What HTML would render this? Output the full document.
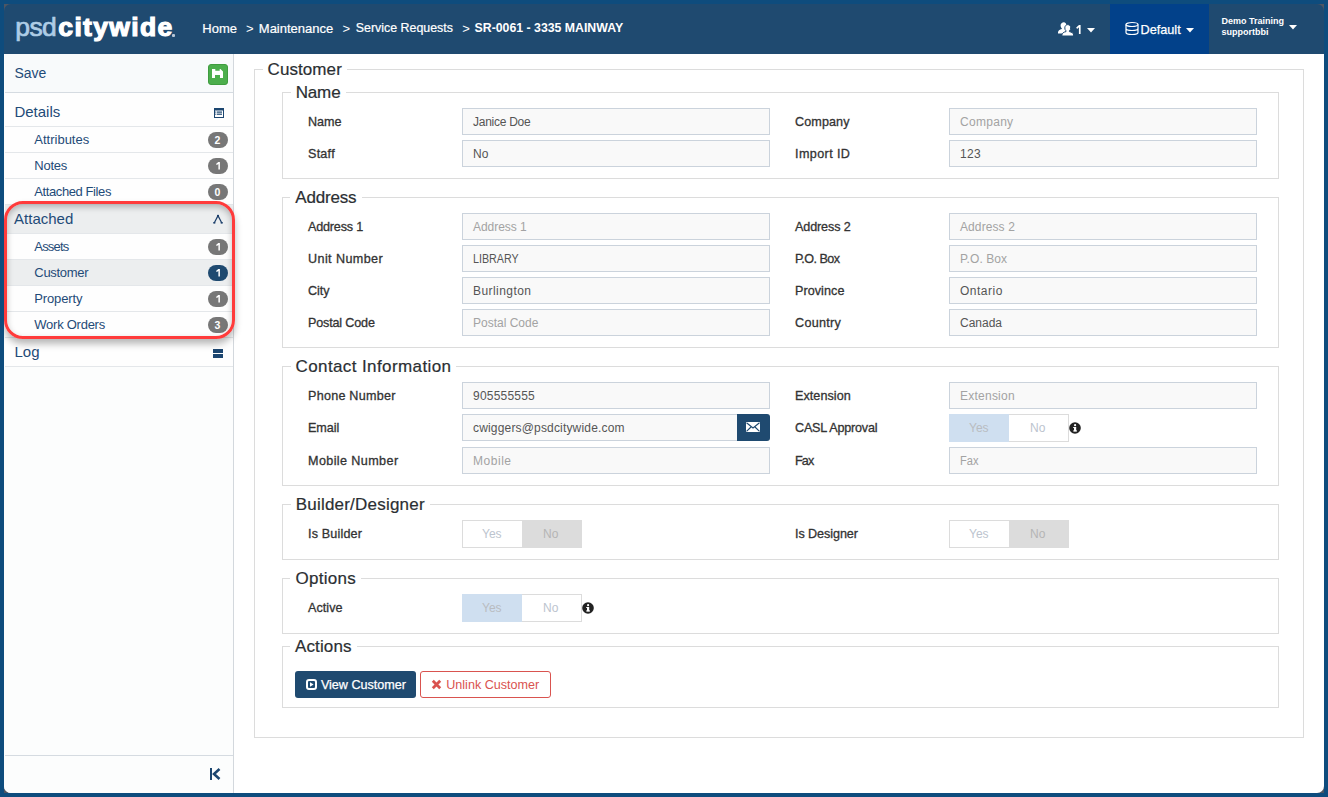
<!DOCTYPE html>
<html><head><meta charset="utf-8"><style>
html,body{margin:0;padding:0;}
body{width:1328px;height:797px;overflow:hidden;position:relative;background:#0e4c7d;font-family:"Liberation Sans",sans-serif;}
.t{position:absolute;white-space:nowrap;}
.b{position:absolute;box-sizing:border-box;}
svg{position:absolute;overflow:visible;}
</style></head><body>
<div class="b" style="left:4px;top:4px;width:8px;height:8px;background:#4e5663;"></div>
<div class="b" style="left:1316px;top:4px;width:8px;height:8px;background:#4e5663;"></div>
<div class="b" style="left:4px;top:785px;width:8px;height:8px;background:#4e5663;"></div>
<div class="b" style="left:1316px;top:785px;width:8px;height:8px;background:#4e5663;"></div>
<div id="w" style="position:absolute;left:0;top:0;width:1328px;height:797px;clip-path:inset(4px round 7px);">
<div class="b" style="left:4px;top:54px;width:1320px;height:739px;background:#fff;"></div>
<div class="b" style="left:4px;top:4px;width:1320px;height:50px;background:#1f4a70;"></div>
<div class="b" style="left:1110px;top:4px;width:99px;height:50px;background:#02418a;"></div>
<div class="t" style="left:15.3px;top:14.36px;font-size:26.5px;line-height:26.5px;color:#aecde6;font-weight:normal;letter-spacing:-0.6px;-webkit-text-stroke:0.7px #aecde6;">psd</div>
<div class="t" style="left:58.3px;top:14.26px;font-size:26.5px;line-height:26.5px;color:#ffffff;font-weight:bold;-webkit-text-stroke:1.2px #fff;letter-spacing:1.35px;">citywide</div>
<div class="b" style="left:172px;top:34px;width:3px;height:3px;background:#b7c6d6;border-radius:1px;"></div>
<div class="t" style="left:202.3px;top:21.79px;font-size:13px;line-height:13px;color:#fff;font-weight:normal;-webkit-text-stroke:0.2px #fff;">Home</div>
<div class="t" style="left:246px;top:21.79px;font-size:13px;line-height:13px;color:#fff;font-weight:normal;">&gt;</div>
<div class="t" style="left:258.8px;top:21.79px;font-size:13px;line-height:13px;color:#fff;font-weight:normal;-webkit-text-stroke:0.2px #fff;">Maintenance</div>
<div class="t" style="left:342.5px;top:21.79px;font-size:13px;line-height:13px;color:#fff;font-weight:normal;">&gt;</div>
<div class="t" style="left:355.8px;top:22.30px;font-size:12.4px;line-height:12.4px;color:#fff;font-weight:normal;-webkit-text-stroke:0.2px #fff;">Service Requests</div>
<div class="t" style="left:462.2px;top:21.79px;font-size:13px;line-height:13px;color:#fff;font-weight:normal;">&gt;</div>
<div class="t" style="left:474.6px;top:22.39px;font-size:12.3px;line-height:12.3px;color:#fff;font-weight:bold;">SR-0061 - 3335 MAINWAY</div>
<svg style="left:1076px;top:25px" width="5" height="9" viewBox="0 0 5 9"><path d="M0.2 2.5L3 0H4.6V9H2.9V2.3L1.1 3.9Z" fill="#fff"/></svg>
<svg style="left:1087px;top:28px" width="8" height="5"><path d="M0 0H8L4 4.5Z" fill="#fff"/></svg>
<div class="t" style="left:1140.5px;top:23.85px;font-size:12.7px;line-height:12.7px;color:#fff;font-weight:normal;-webkit-text-stroke:0.25px #fff;">Default</div>
<svg style="left:1186px;top:28px" width="8" height="5"><path d="M0 0H8L4 4.5Z" fill="#fff"/></svg>
<div class="t" style="left:1221.6px;top:17.28px;font-size:9px;line-height:9px;color:#fff;font-weight:bold;">Demo Training</div>
<div class="t" style="left:1221.5px;top:27.88px;font-size:9px;line-height:9px;color:#fff;font-weight:bold;">supportbbi</div>
<svg style="left:1289px;top:25px" width="8" height="5"><path d="M0 0H8L4 4.5Z" fill="#fff"/></svg>
<svg style="left:1058px;top:22px" width="16" height="14" viewBox="0 0 16 14">
<path d="M5.8 0.2C7.4 0.2 8.4 1.5 8.4 3.3C8.4 4.6 7.9 5.6 7.1 6.2V7C9.3 7.5 11 8.6 11 10.4V11.5H0V10.4C0 8.6 1.6 7.5 3.8 7V6.2C3 5.6 2.6 4.6 2.6 3.3C2.6 1.5 4.2 0.2 5.8 0.2Z" fill="#fff"/>
<path d="M9.8 2.6C11.5 2.6 12.7 4 12.7 5.9C12.7 7.2 12.2 8.2 11.4 8.8V9.6C13.7 10.1 15.6 11.2 15.6 13V14H3.9V13C3.9 11.2 5.7 10.1 8 9.6V8.8C7.2 8.2 6.8 7.2 6.8 5.9C6.8 4 8.1 2.6 9.8 2.6Z" fill="#fff" stroke="#1f4a70" stroke-width="1"/>
</svg>
<svg style="left:1124.8px;top:22px" width="15" height="13" viewBox="0 0 15 13">
<ellipse cx="7" cy="2.5" rx="6" ry="2" fill="none" stroke="#fff" stroke-width="1.2"/>
<path d="M1 2.5V10.5c0 1.1 2.7 2 6 2s6-.9 6-2V2.5M1 6.5c0 1.1 2.7 2 6 2s6-.9 6-2" fill="none" stroke="#fff" stroke-width="1.2"/>
</svg>
<div class="b" style="left:4px;top:54px;width:230px;height:739px;background:#fcfdfd;border-right:1px solid #d3d8dd;"></div>
<div class="b" style="left:5px;top:54px;width:228px;height:38px;background:#f8fafb;"></div>
<div class="b" style="left:5px;top:93px;width:228px;height:274px;background:#fefefe;"></div>
<div class="t" style="left:14.4px;top:66.05px;font-size:14px;line-height:14px;color:#1f4b78;font-weight:normal;">Save</div>
<div class="b" style="left:208px;top:64px;width:20px;height:21px;background:#4cae4c;border:1px solid #3f9c3f;border-radius:3px;"></div>
<svg style="left:212px;top:69px" width="11" height="9" viewBox="0 0 11 9"><path d="M0 0H8.5L11 2.5V9H8V6H3V9H0Z M3.3 0V1.8H7.7V0Z" fill="#fff" fill-rule="evenodd"/></svg>
<div class="b" style="left:5px;top:92px;width:228px;height:1px;background:#d5dbe1;"></div>
<div class="t" style="left:14.4px;top:104.40px;font-size:15px;line-height:15px;color:#1f4b78;font-weight:normal;">Details</div>
<svg style="left:214px;top:108px" width="10" height="10" viewBox="0 0 10 10"><rect x="0" y="0" width="10" height="10" fill="#1c4670"/><rect x="1" y="2.5" width="8" height="6.5" fill="#fff"/><rect x="3" y="3.5" width="5" height="1.2" fill="#1c4670"/><rect x="3" y="5.6" width="5" height="1.2" fill="#1c4670"/><rect x="1.3" y="3.5" width="1" height="1.2" fill="#1c4670"/><rect x="1.3" y="5.6" width="1" height="1.2" fill="#1c4670"/></svg>
<div class="b" style="left:5px;top:126px;width:228px;height:1px;background:#e4e7ea;"></div>
<div class="t" style="left:34.3px;top:132.79px;font-size:13px;line-height:13px;color:#1f4b78;font-weight:normal;"><span style="letter-spacing:-0.002px">Attribute</span>s</div>
<div class="b" style="left:208px;top:132px;width:20px;height:16px;background:#777;border-radius:8px;"></div>
<div class="t" style="left:214.6px;top:134.91px;font-size:10.5px;line-height:10.5px;color:#fff;font-weight:bold;">2</div>
<div class="b" style="left:5px;top:152px;width:228px;height:1px;background:#e4e7ea;"></div>
<div class="t" style="left:34.3px;top:158.79px;font-size:13px;line-height:13px;color:#1f4b78;font-weight:normal;"><span style="letter-spacing:-0.265px">Note</span>s</div>
<div class="b" style="left:208px;top:158px;width:20px;height:16px;background:#777;border-radius:8px;"></div>
<svg style="left:215.6px;top:162.1px" width="4" height="7.5" viewBox="0 0 4 7.5"><path d="M0 1.9L2.3 0H3.9V7.5H2.4V1.9L0.8 3.1Z" fill="#fff"/></svg>
<div class="b" style="left:5px;top:178px;width:228px;height:1px;background:#e4e7ea;"></div>
<div class="t" style="left:34.3px;top:184.79px;font-size:13px;line-height:13px;color:#1f4b78;font-weight:normal;"><span style="letter-spacing:-0.406px">Attached File</span>s</div>
<div class="b" style="left:208px;top:184px;width:20px;height:16px;background:#777;border-radius:8px;"></div>
<div class="t" style="left:214.6px;top:186.91px;font-size:10.5px;line-height:10.5px;color:#fff;font-weight:bold;">0</div>
<div class="b" style="left:5px;top:204px;width:228px;height:1px;background:#e4e7ea;"></div>
<div class="b" style="left:5px;top:205px;width:228px;height:28px;background:#eceeef;"></div>
<div class="t" style="left:14.1px;top:211.20px;font-size:15px;line-height:15px;color:#1f4b78;font-weight:normal;">Attached</div>
<svg style="left:213px;top:214px" width="10" height="10" viewBox="0 0 10 10"><path d="M1.2 9L5 1.6L8.8 9" fill="none" stroke="#1c3f6b" stroke-width="1.25"/><rect x="0.3" y="8" width="2" height="1.6" fill="#1c3f6b"/><rect x="7.7" y="8" width="2" height="1.6" fill="#1c3f6b"/><rect x="4" y="1" width="2" height="1.6" fill="#1c3f6b"/></svg>
<div class="b" style="left:5px;top:233px;width:228px;height:1px;background:#e4e7ea;"></div>
<div class="t" style="left:34.3px;top:239.79px;font-size:13px;line-height:13px;color:#1f4b78;font-weight:normal;"><span style="letter-spacing:-0.803px">Asset</span>s</div>
<div class="b" style="left:208px;top:239px;width:20px;height:16px;background:#777;border-radius:8px;"></div>
<svg style="left:215.6px;top:243.1px" width="4" height="7.5" viewBox="0 0 4 7.5"><path d="M0 1.9L2.3 0H3.9V7.5H2.4V1.9L0.8 3.1Z" fill="#fff"/></svg>
<div class="b" style="left:5px;top:259px;width:228px;height:1px;background:#e4e7ea;"></div>
<div class="b" style="left:5px;top:260px;width:228px;height:26px;background:#eceeef;"></div>
<div class="t" style="left:34.3px;top:265.79px;font-size:13px;line-height:13px;color:#1f4b78;font-weight:normal;"><span style="letter-spacing:-0.307px">Custome</span>r</div>
<div class="b" style="left:208px;top:265px;width:20px;height:16px;background:#1f4a70;border-radius:8px;"></div>
<svg style="left:215.6px;top:269.1px" width="4" height="7.5" viewBox="0 0 4 7.5"><path d="M0 1.9L2.3 0H3.9V7.5H2.4V1.9L0.8 3.1Z" fill="#fff"/></svg>
<div class="b" style="left:5px;top:285px;width:228px;height:1px;background:#e4e7ea;"></div>
<div class="t" style="left:34.3px;top:291.79px;font-size:13px;line-height:13px;color:#1f4b78;font-weight:normal;"><span style="letter-spacing:-0.147px">Propert</span>y</div>
<div class="b" style="left:208px;top:291px;width:20px;height:16px;background:#777;border-radius:8px;"></div>
<svg style="left:215.6px;top:295.1px" width="4" height="7.5" viewBox="0 0 4 7.5"><path d="M0 1.9L2.3 0H3.9V7.5H2.4V1.9L0.8 3.1Z" fill="#fff"/></svg>
<div class="b" style="left:5px;top:311px;width:228px;height:1px;background:#e4e7ea;"></div>
<div class="t" style="left:34.3px;top:317.79px;font-size:13px;line-height:13px;color:#1f4b78;font-weight:normal;"><span style="letter-spacing:-0.254px">Work Order</span>s</div>
<div class="b" style="left:208px;top:317px;width:20px;height:16px;background:#777;border-radius:8px;"></div>
<div class="t" style="left:214.6px;top:319.91px;font-size:10.5px;line-height:10.5px;color:#fff;font-weight:bold;">3</div>
<div class="b" style="left:5px;top:337px;width:228px;height:1px;background:#e4e7ea;"></div>
<div class="t" style="left:14.5px;top:344.20px;font-size:15px;line-height:15px;color:#1f4b78;font-weight:normal;">Log</div>
<svg style="left:213px;top:349px" width="10" height="9" viewBox="0 0 10 9"><rect x="0" y="0" width="10" height="4" fill="#1c4670"/><rect x="0" y="5" width="10" height="4" fill="#1c4670"/></svg>
<div class="b" style="left:5px;top:366px;width:228px;height:1px;background:#e4e7ea;"></div>
<div class="b" style="left:5px;top:755px;width:228px;height:1px;background:#d5dbe1;"></div>
<svg style="left:210px;top:768px" width="11" height="12" viewBox="0 0 11 12"><rect x="0" y="0" width="2" height="12" fill="#1c4670"/><path d="M9.5 1L4 6L9.5 11" fill="none" stroke="#1c4670" stroke-width="2.6"/></svg>
<div class="b" style="left:4px;top:201px;width:231px;height:138px;border:3px solid #ff3b3b;border-radius:19px;box-shadow:0 5px 7px rgba(0,0,0,0.28), inset 0 3px 6px rgba(0,0,0,0.25);"></div>
<div class="b" style="left:254px;top:69px;width:1050px;height:669px;border:1px solid #dcdcdc;"></div>
<div class="t" style="left:262.6px;top:61.46px;font-size:17px;line-height:17px;color:#2b2f33;background:#fff;padding:0 5px;-webkit-text-stroke:0.2px #2b2f33;"><span style="letter-spacing:0.073px">Custome</span>r</div>
<div class="b" style="left:282px;top:92px;width:997px;height:87px;border:1px solid #dcdcdc;"></div>
<div class="t" style="left:290.7px;top:84.46px;font-size:17px;line-height:17px;color:#2b2f33;background:#fff;padding:0 5px;-webkit-text-stroke:0.2px #2b2f33;"><span style="letter-spacing:-0.149px">Nam</span>e</div>
<div class="b" style="left:282px;top:197px;width:997px;height:151px;border:1px solid #dcdcdc;"></div>
<div class="t" style="left:290.3px;top:189.46px;font-size:17px;line-height:17px;color:#2b2f33;background:#fff;padding:0 5px;-webkit-text-stroke:0.2px #2b2f33;"><span style="letter-spacing:-0.194px">Addres</span>s</div>
<div class="b" style="left:282px;top:366px;width:997px;height:120px;border:1px solid #dcdcdc;"></div>
<div class="t" style="left:290.5px;top:358.46px;font-size:17px;line-height:17px;color:#2b2f33;background:#fff;padding:0 5px;-webkit-text-stroke:0.2px #2b2f33;"><span style="letter-spacing:0.397px">Contact Informatio</span>n</div>
<div class="b" style="left:282px;top:504px;width:997px;height:56px;border:1px solid #dcdcdc;"></div>
<div class="t" style="left:290.7px;top:496.46px;font-size:17px;line-height:17px;color:#2b2f33;background:#fff;padding:0 5px;-webkit-text-stroke:0.2px #2b2f33;"><span style="letter-spacing:0.215px">Builder/Designe</span>r</div>
<div class="b" style="left:282px;top:578px;width:997px;height:56px;border:1px solid #dcdcdc;"></div>
<div class="t" style="left:290.4px;top:570.46px;font-size:17px;line-height:17px;color:#2b2f33;background:#fff;padding:0 5px;-webkit-text-stroke:0.2px #2b2f33;"><span style="letter-spacing:0.285px">Option</span>s</div>
<div class="b" style="left:282px;top:646px;width:997px;height:62px;border:1px solid #dcdcdc;"></div>
<div class="t" style="left:290.0px;top:638.46px;font-size:17px;line-height:17px;color:#2b2f33;background:#fff;padding:0 5px;-webkit-text-stroke:0.2px #2b2f33;"><span style="letter-spacing:0.125px">Action</span>s</div>
<div class="t" style="left:308px;top:115.63px;font-size:12.6px;line-height:12.6px;color:#333;font-weight:normal;-webkit-text-stroke:0.3px #333;"><span style="letter-spacing:-0.004px">Nam</span>e</div>
<div class="b" style="left:462px;top:108px;width:308px;height:27px;background:#f9f9f9;border:1px solid #cbd3dc;"></div>
<div class="t" style="left:473px;top:115.84px;font-size:12px;line-height:12px;color:#555;font-weight:normal;"><span style="letter-spacing:-0.259px">Janice Do</span>e</div>
<div class="t" style="left:795px;top:115.63px;font-size:12.6px;line-height:12.6px;color:#333;font-weight:normal;-webkit-text-stroke:0.3px #333;"><span style="letter-spacing:0.096px">Compan</span>y</div>
<div class="b" style="left:949px;top:108px;width:308px;height:27px;background:#f9f9f9;border:1px solid #cbd3dc;"></div>
<div class="t" style="left:960px;top:115.84px;font-size:12px;line-height:12px;color:#a3a3a3;font-weight:normal;"><span style="letter-spacing:0.291px">Compan</span>y</div>
<div class="t" style="left:308px;top:147.63px;font-size:12.6px;line-height:12.6px;color:#333;font-weight:normal;-webkit-text-stroke:0.3px #333;"><span style="letter-spacing:0.229px">Staf</span>f</div>
<div class="b" style="left:462px;top:140px;width:308px;height:27px;background:#f9f9f9;border:1px solid #cbd3dc;"></div>
<div class="t" style="left:473px;top:147.84px;font-size:12px;line-height:12px;color:#555;font-weight:normal;"><span style="letter-spacing:0.061px">N</span>o</div>
<div class="t" style="left:795px;top:147.63px;font-size:12.6px;line-height:12.6px;color:#333;font-weight:normal;-webkit-text-stroke:0.3px #333;"><span style="letter-spacing:0.387px">Import I</span>D</div>
<div class="b" style="left:949px;top:140px;width:308px;height:27px;background:#f9f9f9;border:1px solid #cbd3dc;"></div>
<div class="t" style="left:960px;top:147.84px;font-size:12px;line-height:12px;color:#555;font-weight:normal;"><span style="letter-spacing:0.290px">12</span>3</div>
<div class="t" style="left:308px;top:220.63px;font-size:12.6px;line-height:12.6px;color:#333;font-weight:normal;-webkit-text-stroke:0.3px #333;"><span style="letter-spacing:-0.191px">Address </span>1</div>
<div class="b" style="left:462px;top:213px;width:308px;height:27px;background:#f9f9f9;border:1px solid #cbd3dc;"></div>
<div class="t" style="left:473px;top:220.84px;font-size:12px;line-height:12px;color:#a3a3a3;font-weight:normal;"><span style="letter-spacing:-0.041px">Address </span>1</div>
<div class="t" style="left:795px;top:220.63px;font-size:12.6px;line-height:12.6px;color:#333;font-weight:normal;-webkit-text-stroke:0.3px #333;"><span style="letter-spacing:-0.129px">Address </span>2</div>
<div class="b" style="left:949px;top:213px;width:308px;height:27px;background:#f9f9f9;border:1px solid #cbd3dc;"></div>
<div class="t" style="left:960px;top:220.84px;font-size:12px;line-height:12px;color:#a3a3a3;font-weight:normal;"><span style="letter-spacing:0.096px">Address </span>2</div>
<div class="t" style="left:308px;top:252.63px;font-size:12.6px;line-height:12.6px;color:#333;font-weight:normal;-webkit-text-stroke:0.3px #333;"><span style="letter-spacing:0.398px">Unit Numbe</span>r</div>
<div class="b" style="left:462px;top:245px;width:308px;height:27px;background:#f9f9f9;border:1px solid #cbd3dc;"></div>
<div class="t" style="left:473px;top:252.84px;font-size:12px;line-height:12px;color:#555;font-weight:normal;transform-origin:0 0;transform:scaleX(0.892);">LIBRARY</div>
<div class="t" style="left:795px;top:252.63px;font-size:12.6px;line-height:12.6px;color:#333;font-weight:normal;-webkit-text-stroke:0.3px #333;"><span style="letter-spacing:-0.528px">P.O. Bo</span>x</div>
<div class="b" style="left:949px;top:245px;width:308px;height:27px;background:#f9f9f9;border:1px solid #cbd3dc;"></div>
<div class="t" style="left:960px;top:252.84px;font-size:12px;line-height:12px;color:#a3a3a3;font-weight:normal;"><span style="letter-spacing:0.090px">P.O. Bo</span>x</div>
<div class="t" style="left:308px;top:284.63px;font-size:12.6px;line-height:12.6px;color:#333;font-weight:normal;-webkit-text-stroke:0.3px #333;"><span style="letter-spacing:-0.067px">Cit</span>y</div>
<div class="b" style="left:462px;top:277px;width:308px;height:27px;background:#f9f9f9;border:1px solid #cbd3dc;"></div>
<div class="t" style="left:473px;top:284.84px;font-size:12px;line-height:12px;color:#555;font-weight:normal;"><span style="letter-spacing:0.441px">Burlingto</span>n</div>
<div class="t" style="left:795px;top:284.63px;font-size:12.6px;line-height:12.6px;color:#333;font-weight:normal;-webkit-text-stroke:0.3px #333;"><span style="letter-spacing:0.054px">Provinc</span>e</div>
<div class="b" style="left:949px;top:277px;width:308px;height:27px;background:#f9f9f9;border:1px solid #cbd3dc;"></div>
<div class="t" style="left:960px;top:284.84px;font-size:12px;line-height:12px;color:#555;font-weight:normal;"><span style="letter-spacing:0.508px">Ontari</span>o</div>
<div class="t" style="left:308px;top:316.63px;font-size:12.6px;line-height:12.6px;color:#333;font-weight:normal;-webkit-text-stroke:0.3px #333;"><span style="letter-spacing:-0.174px">Postal Cod</span>e</div>
<div class="b" style="left:462px;top:309px;width:308px;height:27px;background:#f9f9f9;border:1px solid #cbd3dc;"></div>
<div class="t" style="left:473px;top:316.84px;font-size:12px;line-height:12px;color:#a3a3a3;font-weight:normal;"><span style="letter-spacing:-0.007px">Postal Cod</span>e</div>
<div class="t" style="left:795px;top:316.63px;font-size:12.6px;line-height:12.6px;color:#333;font-weight:normal;-webkit-text-stroke:0.3px #333;"><span style="letter-spacing:0.297px">Countr</span>y</div>
<div class="b" style="left:949px;top:309px;width:308px;height:27px;background:#f9f9f9;border:1px solid #cbd3dc;"></div>
<div class="t" style="left:960px;top:316.84px;font-size:12px;line-height:12px;color:#555;font-weight:normal;"><span style="letter-spacing:-0.007px">Canad</span>a</div>
<div class="t" style="left:308px;top:389.63px;font-size:12.6px;line-height:12.6px;color:#333;font-weight:normal;-webkit-text-stroke:0.3px #333;"><span style="letter-spacing:0.241px">Phone Numbe</span>r</div>
<div class="b" style="left:462px;top:382px;width:308px;height:27px;background:#f9f9f9;border:1px solid #cbd3dc;"></div>
<div class="t" style="left:473px;top:389.84px;font-size:12px;line-height:12px;color:#555;font-weight:normal;"><span style="letter-spacing:0.205px">90555555</span>5</div>
<div class="t" style="left:795px;top:389.63px;font-size:12.6px;line-height:12.6px;color:#333;font-weight:normal;-webkit-text-stroke:0.3px #333;"><span style="letter-spacing:0.058px">Extensio</span>n</div>
<div class="b" style="left:949px;top:382px;width:308px;height:27px;background:#f9f9f9;border:1px solid #cbd3dc;"></div>
<div class="t" style="left:960px;top:389.84px;font-size:12px;line-height:12px;color:#a3a3a3;font-weight:normal;"><span style="letter-spacing:0.238px">Extensio</span>n</div>
<div class="t" style="left:308px;top:421.63px;font-size:12.6px;line-height:12.6px;color:#333;font-weight:normal;-webkit-text-stroke:0.3px #333;"><span style="letter-spacing:-0.077px">Emai</span>l</div>
<div class="b" style="left:462px;top:414px;width:276px;height:27px;background:#f9f9f9;border:1px solid #cbd3dc;"></div>
<div class="t" style="left:473px;top:421.84px;font-size:12px;line-height:12px;color:#555;font-weight:normal;"><span style="letter-spacing:0.171px">cwiggers@psdcitywide.co</span>m</div>
<div class="b" style="left:737px;top:414px;width:33px;height:27px;background:#1f4a70;border-radius:0 3px 3px 0;"></div>
<svg style="left:746px;top:422px" width="14" height="10" viewBox="0 0 14 10"><rect x="0" y="0" width="14" height="10" fill="#fff"/><path d="M0.5 0.8L7 6L13.5 0.8 M0.5 9.4L5 5 M13.5 9.4L9 5" fill="none" stroke="#1f4a70" stroke-width="1.1"/></svg>
<div class="t" style="left:795px;top:421.63px;font-size:12.6px;line-height:12.6px;color:#333;font-weight:normal;-webkit-text-stroke:0.3px #333;"><span style="letter-spacing:-0.199px">CASL Approva</span>l</div>
<div class="b" style="left:949px;top:414px;width:120px;height:28px;background:#fff;border:1px solid #dcdcdc;"></div>
<div class="b" style="left:949px;top:414px;width:60px;height:28px;background:#cfdff0;"></div>
<div class="t" style="left:969px;top:422.34px;font-size:12px;line-height:12px;color:#b9bcc0;font-weight:normal;">Yes</div>
<div class="t" style="left:1030px;top:422.34px;font-size:12px;line-height:12px;color:#bcc4ce;font-weight:normal;">No</div>
<svg style="left:1069px;top:422px" width="12" height="12" viewBox="0 0 12 12"><circle cx="6" cy="6" r="5.8" fill="#222"/><rect x="5" y="5" width="2.2" height="4.3" fill="#fff"/><rect x="4.2" y="8.4" width="3.8" height="1.1" fill="#fff"/><rect x="4.2" y="5" width="1.5" height="1" fill="#fff"/><circle cx="6.1" cy="3.2" r="1.1" fill="#fff"/></svg>
<div class="t" style="left:308px;top:454.63px;font-size:12.6px;line-height:12.6px;color:#333;font-weight:normal;-webkit-text-stroke:0.3px #333;"><span style="letter-spacing:0.389px">Mobile Numbe</span>r</div>
<div class="b" style="left:462px;top:447px;width:308px;height:27px;background:#f9f9f9;border:1px solid #cbd3dc;"></div>
<div class="t" style="left:473px;top:454.84px;font-size:12px;line-height:12px;color:#a3a3a3;font-weight:normal;"><span style="letter-spacing:0.530px">Mobil</span>e</div>
<div class="t" style="left:795px;top:454.63px;font-size:12.6px;line-height:12.6px;color:#333;font-weight:normal;-webkit-text-stroke:0.3px #333;"><span style="letter-spacing:-0.852px">Fa</span>x</div>
<div class="b" style="left:949px;top:447px;width:308px;height:27px;background:#f9f9f9;border:1px solid #cbd3dc;"></div>
<div class="t" style="left:960px;top:454.84px;font-size:12px;line-height:12px;color:#a3a3a3;font-weight:normal;transform-origin:0 0;transform:scaleX(0.925);">Fax</div>
<div class="t" style="left:308px;top:527.63px;font-size:12.6px;line-height:12.6px;color:#333;font-weight:normal;-webkit-text-stroke:0.3px #333;"><span style="letter-spacing:0.164px">Is Builde</span>r</div>
<div class="b" style="left:462px;top:520px;width:120px;height:28px;background:#fff;border:1px solid #dcdcdc;"></div>
<div class="b" style="left:522px;top:520px;width:60px;height:28px;background:#dcdcdc;"></div>
<div class="t" style="left:482px;top:528.34px;font-size:12px;line-height:12px;color:#bcc4ce;font-weight:normal;">Yes</div>
<div class="t" style="left:543px;top:528.34px;font-size:12px;line-height:12px;color:#b5b5b5;font-weight:normal;">No</div>
<div class="t" style="left:795px;top:527.63px;font-size:12.6px;line-height:12.6px;color:#333;font-weight:normal;-webkit-text-stroke:0.3px #333;"><span style="letter-spacing:-0.073px">Is Designe</span>r</div>
<div class="b" style="left:949px;top:520px;width:120px;height:28px;background:#fff;border:1px solid #dcdcdc;"></div>
<div class="b" style="left:1009px;top:520px;width:60px;height:28px;background:#dcdcdc;"></div>
<div class="t" style="left:969px;top:528.34px;font-size:12px;line-height:12px;color:#bcc4ce;font-weight:normal;">Yes</div>
<div class="t" style="left:1030px;top:528.34px;font-size:12px;line-height:12px;color:#b5b5b5;font-weight:normal;">No</div>
<div class="t" style="left:308px;top:601.63px;font-size:12.6px;line-height:12.6px;color:#333;font-weight:normal;-webkit-text-stroke:0.3px #333;"><span style="letter-spacing:0.037px">Activ</span>e</div>
<div class="b" style="left:462px;top:594px;width:120px;height:28px;background:#fff;border:1px solid #dcdcdc;"></div>
<div class="b" style="left:462px;top:594px;width:60px;height:28px;background:#cfdff0;"></div>
<div class="t" style="left:482px;top:602.34px;font-size:12px;line-height:12px;color:#b9bcc0;font-weight:normal;">Yes</div>
<div class="t" style="left:543px;top:602.34px;font-size:12px;line-height:12px;color:#bcc4ce;font-weight:normal;">No</div>
<svg style="left:582px;top:602px" width="12" height="12" viewBox="0 0 12 12"><circle cx="6" cy="6" r="5.8" fill="#222"/><rect x="5" y="5" width="2.2" height="4.3" fill="#fff"/><rect x="4.2" y="8.4" width="3.8" height="1.1" fill="#fff"/><rect x="4.2" y="5" width="1.5" height="1" fill="#fff"/><circle cx="6.1" cy="3.2" r="1.1" fill="#fff"/></svg>
<div class="b" style="left:295px;top:671px;width:121px;height:27px;background:#1f4a70;border-radius:3px;"></div>
<svg style="left:306px;top:679px" width="11" height="11" viewBox="0 0 11 11"><rect x="1" y="1" width="9" height="9" rx="2" fill="none" stroke="#fff" stroke-width="2"/><path d="M4 3.2V7.8L7.6 5.5Z" fill="#fff"/></svg>
<div class="t" style="left:320.9px;top:678.73px;font-size:12.6px;line-height:12.6px;color:#fff;font-weight:normal;-webkit-text-stroke:0.25px #fff;">View Customer</div>
<div class="b" style="left:420px;top:671px;width:131px;height:27px;background:#fff;border:1px solid #d9534f;border-radius:3px;"></div>
<svg style="left:431px;top:679px" width="11" height="11" viewBox="0 0 11 11"><path d="M1.8 1.8L9.2 9.2M9.2 1.8L1.8 9.2" stroke="#d9534f" stroke-width="2.8"/></svg>
<div class="t" style="left:446.2px;top:678.83px;font-size:12.6px;line-height:12.6px;color:#d9534f;font-weight:normal;">Unlink Customer</div>
</div></body></html>
